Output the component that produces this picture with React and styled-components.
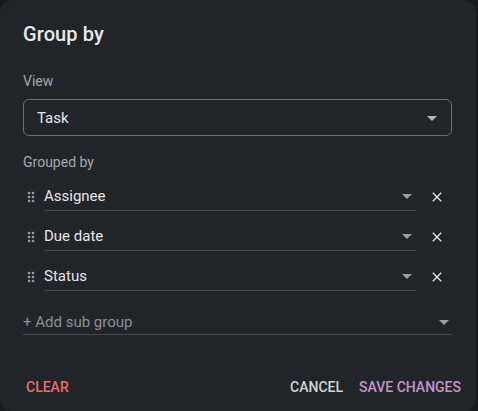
import React from "react";
import styled, { createGlobalStyle } from "styled-components";

const Global = createGlobalStyle`
  html, body { margin: 0; padding: 0; background: #171a1f; }
  body { font-family: Roboto, "Noto Sans", "Liberation Sans", sans-serif; overflow: hidden; }
  * { box-sizing: border-box; }
`;

const Dialog = styled.div`
  width: 476px;
  height: 411px;
  background: #212429;
  border-radius: 12px;
  padding: 18px 24px 0 23px;
  display: flex;
  flex-direction: column;
`;

const Title = styled.h2`
  margin: 0;
  font-size: 20px;
  font-weight: 500;
  line-height: 32px;
  color: #e9eaec;
  letter-spacing: 0.1px;
`;

const Label = styled.div`
  margin-top: ${(p) => p.$mt}px;
  font-size: 14px;
  line-height: 20px;
  color: #a7a9ad;
`;

const SelectBox = styled.div`
  margin-top: 8px;
  height: 37px;
  border: 1px solid #6b6e73;
  border-radius: 6px;
  display: flex;
  align-items: center;
  padding: 0 7px 0 13px;
  font-size: 15px;
  color: #e6e7e9;
`;

const Grow = styled.span`
  flex: 1;
`;

const Rows = styled.div`
  margin-top: 12px;
  display: flex;
  flex-direction: column;
  gap: 13px;
`;

const Row = styled.div`
  display: flex;
  align-items: center;
`;

const Handle = styled.div`
  width: 16px;
  height: 16px;
  margin-right: 5px;
  margin-top: -1px;
  display: flex;
  color: #9c9fa3;
`;

const Field = styled.div`
  flex: 1;
  display: flex;
  align-items: center;
  height: 27px;
  padding-bottom: 2px;
  border-bottom: 1px solid #474a50;
  font-size: 15px;
  line-height: 24px;
  color: ${(p) => (p.$placeholder ? "#8d9094" : "#e6e7e9")};
`;

const Caret = styled.span`
  display: flex;
  width: 24px;
  height: 24px;
  margin-right: ${(p) => p.$mr}px;
  color: ${(p) => p.$color};
`;

const RemoveButton = styled.button`
  width: 36px;
  height: 24px;
  border: 0;
  background: none;
  padding: 0 0 0 6px;
  display: flex;
  align-items: center;
  justify-content: center;
  color: #e6e7e9;
  margin-top: -1px;
`;

const AddRow = styled(Field)`
  flex: none;
  margin-top: 19px;
  height: 25px;
  padding-bottom: 1px;
`;

const Actions = styled.div`
  margin-top: 34px;
  display: flex;
  align-items: center;
  margin-left: -5px;
  margin-right: -17px;
`;

const TextButton = styled.button`
  border: 0;
  background: none;
  padding: 6px 8px;
  font-family: inherit;
  font-size: 14px;
  font-weight: 500;
  line-height: 24px;
  letter-spacing: 0;
  text-transform: uppercase;
  color: ${(p) => p.$color};
`;

const Spacer = styled.div`
  flex: 1;
`;

const ArrowDrop = () => (
  <svg width="24" height="24" viewBox="0 0 24 24" fill="currentColor">
    <path d="M7 10l5 5 5-5z" />
  </svg>
);

const DragIcon = () => (
  <svg width="16" height="16" viewBox="0 0 24 24" fill="currentColor">
    <path d="M11 18c0 1.1-.9 2-2 2s-2-.9-2-2 .9-2 2-2 2 .9 2 2zm-2-8c-1.1 0-2 .9-2 2s.9 2 2 2 2-.9 2-2-.9-2-2-2zm0-6c-1.1 0-2 .9-2 2s.9 2 2 2 2-.9 2-2-.9-2-2-2zm6 4c1.1 0 2-.9 2-2s-.9-2-2-2-2 .9-2 2 .9 2 2 2zm0 2c-1.1 0-2 .9-2 2s.9 2 2 2 2-.9 2-2-.9-2-2-2zm0 6c-1.1 0-2 .9-2 2s.9 2 2 2 2-.9 2-2-.9-2-2-2z" />
  </svg>
);

const CloseIcon = () => (
  <svg width="16" height="16" viewBox="0 0 24 24" fill="currentColor">
    <path d="M19 6.41 17.59 5 12 10.59 6.41 5 5 6.41 10.59 12 5 17.59 6.41 19 12 13.41 17.59 19 19 17.59 13.41 12z" />
  </svg>
);

const groups = ["Assignee", "Due date", "Status"];

export default function App() {
  return (
    <>
      <Global />
      <Dialog>
        <Title>Group by</Title>
        <Label $mt={21}>View</Label>
        <SelectBox>
          <Grow>Task</Grow>
          <Caret $mr={0} $color="#b4b6b9">
            <ArrowDrop />
          </Caret>
        </SelectBox>
        <Label $mt={16}>Grouped by</Label>
        <Rows>
          {groups.map((g) => (
            <Row key={g}>
              <Handle>
                <DragIcon />
              </Handle>
              <Field>
                <Grow>{g}</Grow>
                <Caret $mr={-3} $color="#9a9ca0">
                  <ArrowDrop />
                </Caret>
              </Field>
              <RemoveButton aria-label="remove">
                <CloseIcon />
              </RemoveButton>
            </Row>
          ))}
        </Rows>
        <AddRow $placeholder>
          <Grow>+ Add sub group</Grow>
          <Caret $mr={-4} $color="#9a9ca0">
            <ArrowDrop />
          </Caret>
        </AddRow>
        <Actions>
          <TextButton $color="#f06b6b">Clear</TextButton>
          <Spacer />
          <TextButton $color="#d3d4d6">Cancel</TextButton>
          <TextButton $color="#c794cb">Save changes</TextButton>
        </Actions>
      </Dialog>
    </>
  );
}
